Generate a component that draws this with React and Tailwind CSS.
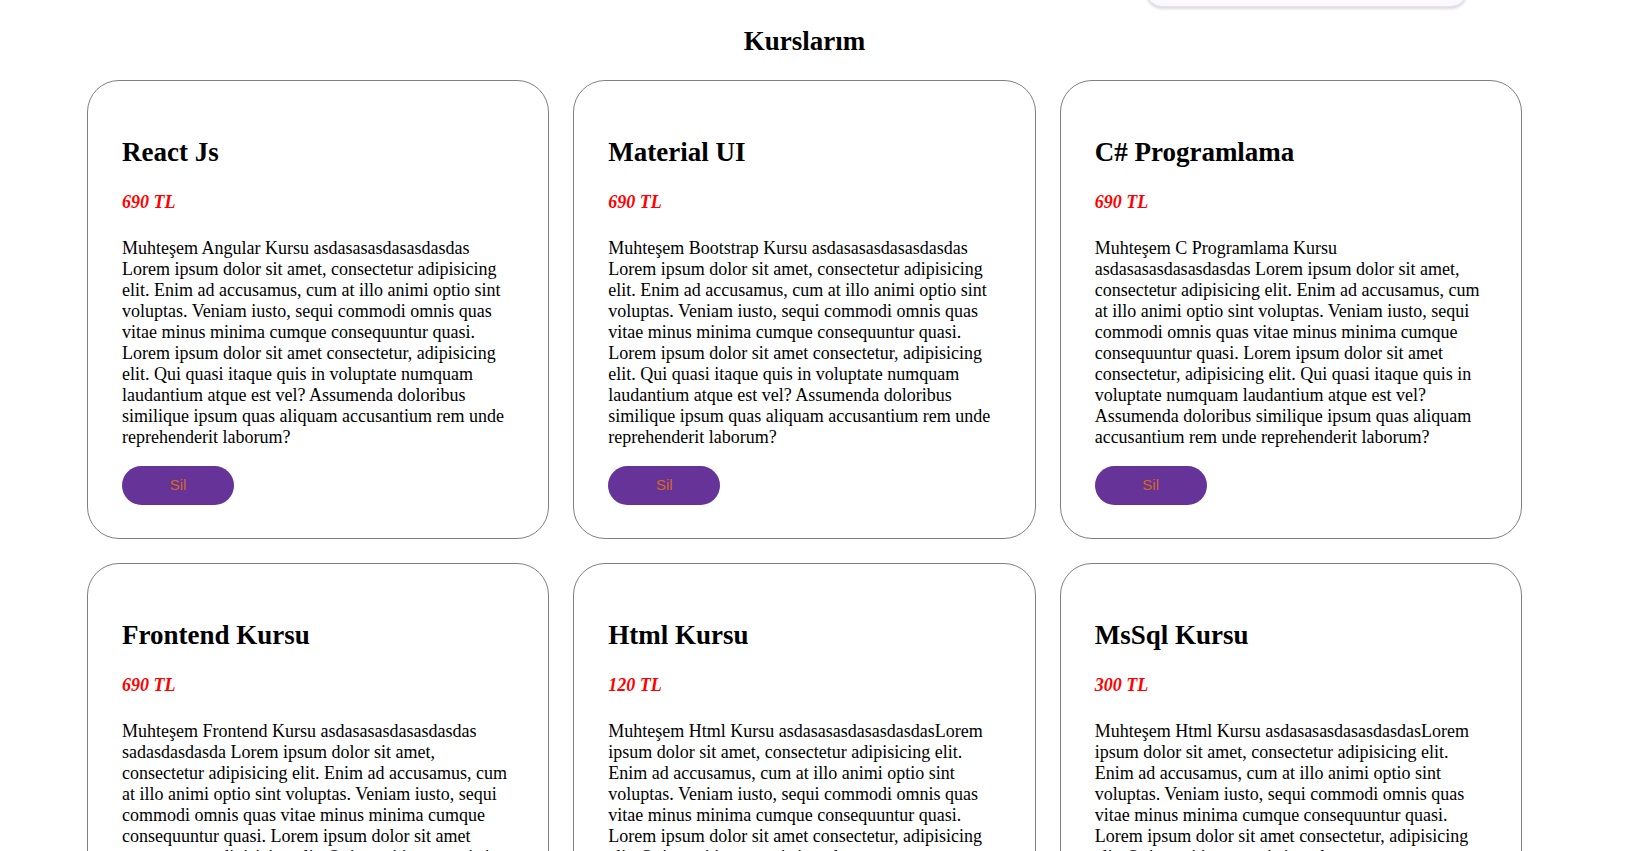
import React from "react";

const LOREM =
  "Lorem ipsum dolor sit amet, consectetur adipisicing elit. Enim ad accusamus, cum at illo animi optio sint voluptas. Veniam iusto, sequi commodi omnis quas vitae minus minima cumque consequuntur quasi. Lorem ipsum dolor sit amet consectetur, adipisicing elit. Qui quasi itaque quis in voluptate numquam laudantium atque est vel? Assumenda doloribus similique ipsum quas aliquam accusantium rem unde reprehenderit laborum?";

const courses = [
  { title: "React Js", price: "690 TL", text: "Muhteşem Angular Kursu asdasasasdasasdasdas " + LOREM },
  { title: "Material UI", price: "690 TL", text: "Muhteşem Bootstrap Kursu asdasasasdasasdasdas " + LOREM },
  { title: "C# Programlama", price: "690 TL", text: "Muhteşem C Programlama Kursu asdasasasdasasdasdas " + LOREM },
  { title: "Frontend Kursu", price: "690 TL", text: "Muhteşem Frontend Kursu asdasasasdasasdasdas sadasdasdasda " + LOREM },
  { title: "Html Kursu", price: "120 TL", text: "Muhteşem Html Kursu asdasasasdasasdasdas" + LOREM },
  { title: "MsSql Kursu", price: "300 TL", text: "Muhteşem Html Kursu asdasasasdasasdasdas" + LOREM },
];

function Card({ c }) {
  return (
    <div className="flex flex-col rounded-[32px] border border-[#808080] px-[34px] pt-[34px] pb-[33px]">
      <h2 className="mt-[22px] text-[27px] font-bold leading-[31px]">{c.title}</h2>
      <h4 className="mt-[24px] text-[18px] font-bold italic leading-[21px] text-[#ff0000]">{c.price}</h4>
      <p className="mt-[25px] text-[18px] leading-[21px]">{c.text}</p>
      <div className="mt-[18px]">
        <button
          className="h-[39px] w-[112px] rounded-full bg-[#663399] text-[15px] text-[#d2691e]"
          style={{ fontFamily: '"Liberation Sans", Arial, sans-serif' }}
        >
          Sil
        </button>
      </div>
    </div>
  );
}

export default function App() {
  return (
    <div
      className="relative min-h-screen w-full overflow-hidden bg-white text-black"
      style={{ fontFamily: '"Liberation Serif", "Times New Roman", serif' }}
    >
      <div className="absolute left-[1146px] top-[-40px] h-[47px] w-[321px] rounded-2xl border border-[#e4e2ec] bg-[#fbf9ff] shadow-[0_2px_3px_rgba(0,0,0,0.15)]" />
      <div className="w-[1609px]">
        <h1 className="pt-[26px] text-center text-[27px] font-bold leading-[31px]">Kurslarım</h1>
        <div className="mt-[23px] grid grid-cols-3 gap-x-[24px] gap-y-[24px] px-[87px]">
          {courses.map((c) => (
            <Card key={c.title} c={c} />
          ))}
        </div>
      </div>
    </div>
  );
}
